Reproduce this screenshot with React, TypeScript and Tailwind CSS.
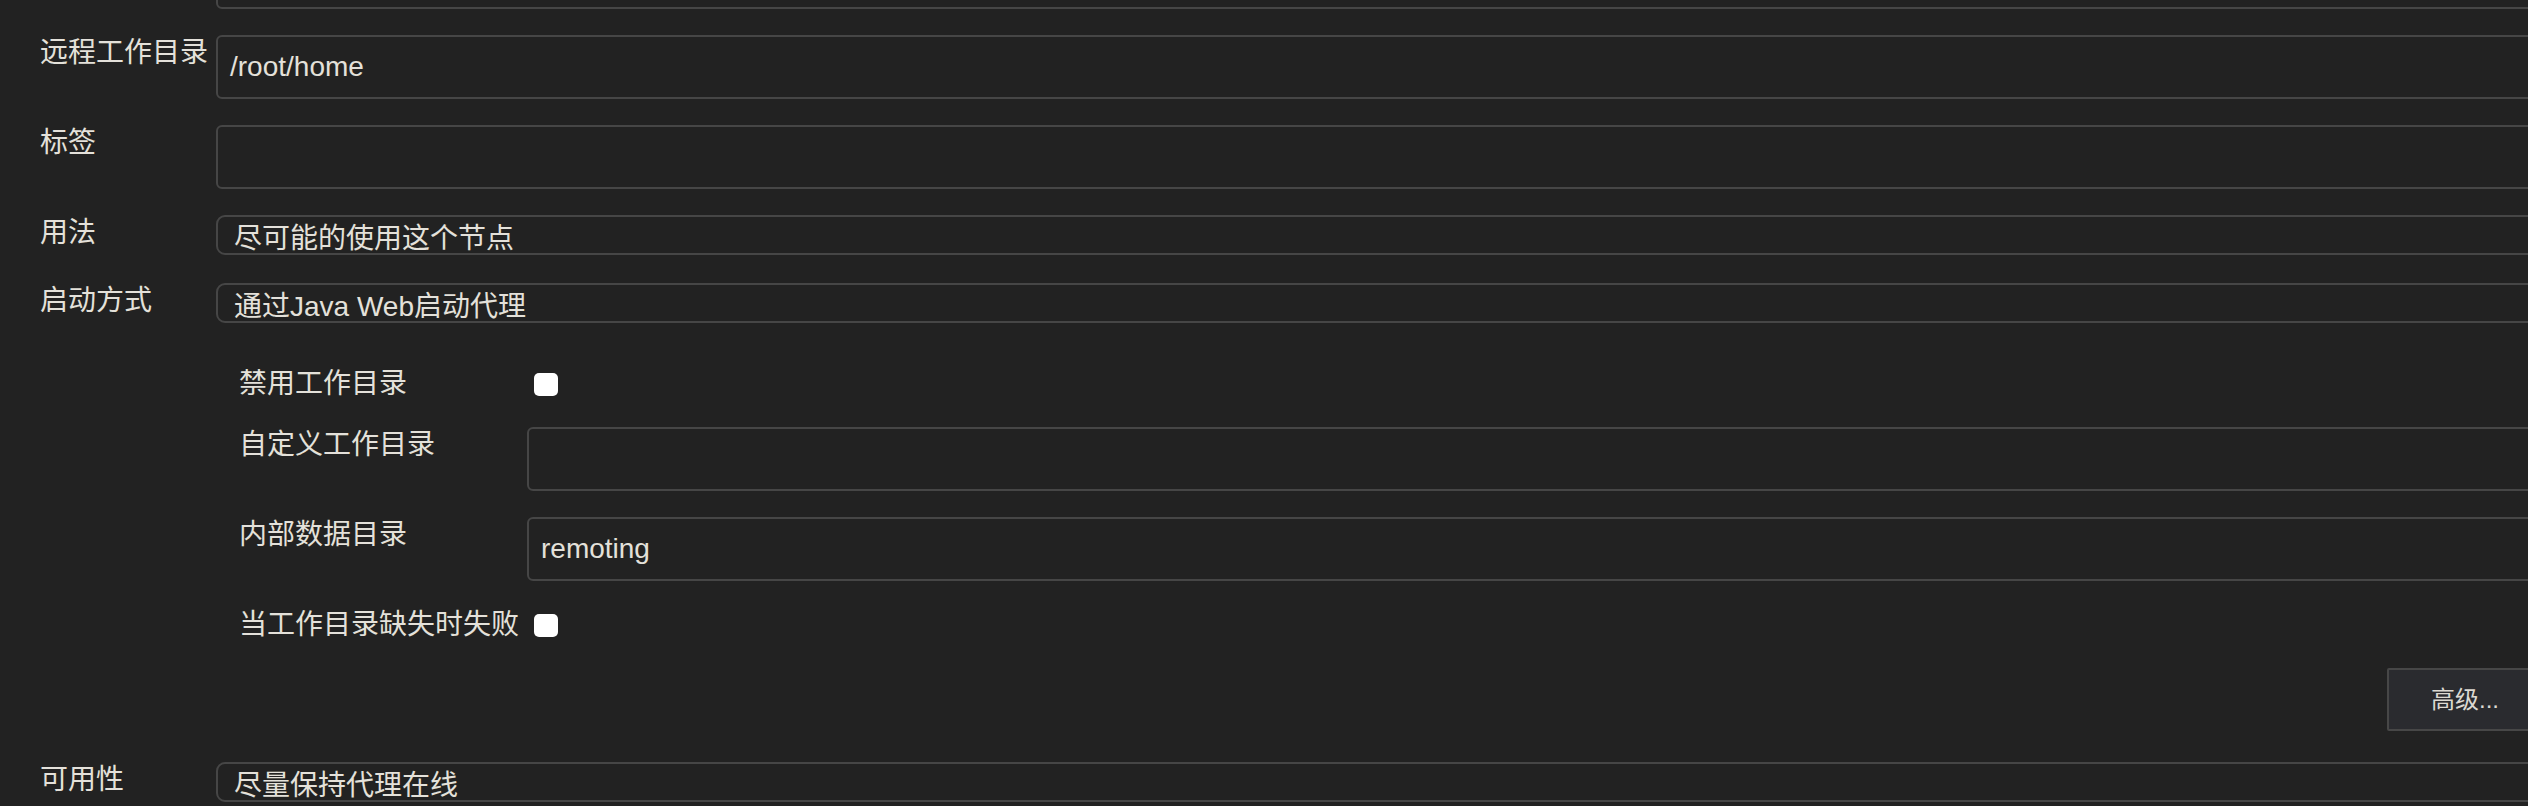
import type { ReactNode } from 'react'

const Label = ({ children, wide }: { children?: ReactNode; wide?: boolean }) => (
  <div
    className={
      (wide ? 'w-[288px]' : 'w-[176px]') +
      ' shrink-0 whitespace-nowrap pt-[2px] text-[28px] leading-[32px]'
    }
  >
    {children}
  </div>
)

const TextInput = ({ value }: { value?: string }) => (
  <div className="flex h-[64px] flex-1 items-center rounded-[6px] border-2 border-[#464646] pl-[12px] text-[28px]">
    {value}
  </div>
)

const Select = ({ value }: { value: string }) => (
  <div className="h-[40px] flex-1 overflow-hidden rounded-[9px] border-2 border-[#464646] pl-[16px] pt-[6px] text-[28px] leading-[32px]">
    {value}
  </div>
)

const Checkbox = () => (
  <span className="ml-[7px] mt-[7px] block h-[23px] w-[24px] rounded-[5px] bg-white" />
)

export default function App() {
  return (
    <div className="h-[806px] w-full overflow-hidden bg-[#222222] font-['Liberation_Sans','Noto_Sans_CJK_SC',sans-serif] text-[#e4e1da]">
      <div className="flex w-[2543px] flex-col pl-[40px]">
        {/* previous field, only its bottom edge shows */}
        <div className="mt-[-55px] flex">
          <Label />
          <TextInput />
        </div>

        <div className="mt-[26px] flex">
          <Label>远程工作目录</Label>
          <TextInput value="/root/home" />
        </div>

        <div className="mt-[26px] flex">
          <Label>标签</Label>
          <TextInput />
        </div>

        <div className="mt-[26px] flex">
          <Label>用法</Label>
          <Select value="尽可能的使用这个节点" />
        </div>

        <div className="mt-[28px] flex">
          <Label>启动方式</Label>
          <Select value="通过Java Web启动代理" />
        </div>

        {/* launcher options */}
        <div className="flex flex-col pl-[199px]">
          <div className="mt-[43px] flex h-[34px]">
            <Label wide>禁用工作目录</Label>
            <Checkbox />
          </div>

          <div className="mt-[27px] flex">
            <Label wide>自定义工作目录</Label>
            <TextInput />
          </div>

          <div className="mt-[26px] flex">
            <Label wide>内部数据目录</Label>
            <TextInput value="remoting" />
          </div>

          <div className="mt-[26px] flex h-[34px]">
            <Label wide>当工作目录缺失时失败</Label>
            <Checkbox />
          </div>

          <div className="mt-[27px] flex justify-end">
            <button className="h-[63px] rounded-[2px] border-2 border-[#474747] bg-[#2a2b2f] px-[42px] text-[24px] text-[#dcd9d2]">
              高级...
            </button>
          </div>
        </div>

        <div className="mt-[31px] flex">
          <Label>可用性</Label>
          <Select value="尽量保持代理在线" />
        </div>
      </div>
    </div>
  )
}
